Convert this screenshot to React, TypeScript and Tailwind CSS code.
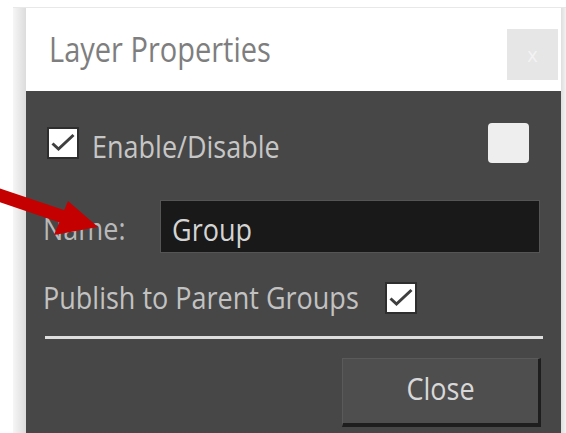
import React from "react";

function CheckBox() {
  return (
    <div className="h-[32px] w-[32px] shrink-0 border-2 border-[#2e2e2e] bg-white">
      <svg viewBox="0 0 28 28" className="h-full w-full">
        <path d="M3.5 14.5 L9.5 20 L24.5 6" fill="none" stroke="#3f3f3f" strokeWidth="3" />
      </svg>
    </div>
  );
}

function Label({ children, className = "" }: { children: React.ReactNode; className?: string }) {
  return (
    <span className={`inline-block origin-center scale-y-[1.15] whitespace-nowrap text-[27px] leading-[32px] ${className}`}>
      {children}
    </span>
  );
}

export default function App() {
  return (
    <div className="relative h-[433px] w-[566px] overflow-hidden bg-white font-['Open_Sans',sans-serif]">
      <div className="ml-[13px] mt-[7px] flex h-[426px] border-t border-[#e8e8e8]">
        {/* window shadow, left side */}
        <div className="w-[13px] bg-linear-to-r from-[#f6f6f6] to-[#dcdcdc]" />

        <div className="flex w-[535px] flex-col">
          {/* title bar */}
          <div className="flex h-[83px] items-start justify-between bg-white">
            <span className="ml-[23px] mt-[21px] inline-block origin-center scale-y-[1.18] whitespace-nowrap text-[29px] leading-[40px] text-[#7e7e7e]">
              Layer Properties
            </span>
            <div className="mr-[3px] mt-[21px] flex h-[51px] w-[51px] items-center justify-center bg-[#e6e6e6] text-[20px] leading-none text-[#f3f3f3]">
              x
            </div>
          </div>

          {/* dialog body */}
          <div className="flex flex-1 flex-col bg-[#474747]">
            <div className="mt-[32px] flex h-[40px] items-center justify-between pl-[21px] pr-[32px]">
              <div className="flex items-center gap-[13px]">
                <CheckBox />
                <Label className="mt-[6px] text-[#c6c6c6]">Enable/Disable</Label>
              </div>
              <div className="h-[40px] w-[41px] rounded-[4px] bg-[#eeeeee]" />
            </div>

            <div className="mt-[37px] flex h-[53px] items-center pl-[17px]">
              <div className="flex w-[117px] items-center">
                <Label className="mt-[2px] text-[#b9b9b9]">Name:</Label>
              </div>
              <div className="flex h-[53px] w-[380px] items-center border border-[#555555] bg-[#191919] pl-[11px]">
                <Label className="mt-[4px] text-[#d4d4d4]">Group</Label>
              </div>
            </div>

            <div className="mt-[29px] flex h-[32px] items-center gap-[26px] pl-[17px]">
              <Label className="-mt-[3px] text-[#c2c2c2]">Publish to Parent Groups</Label>
              <CheckBox />
            </div>

            <div className="ml-[19px] mt-[22px] h-[3px] w-[498px] bg-[#dedede]" />

            <div className="mt-[19px] flex justify-end pr-[20px]">
              <button className="flex h-[69px] w-[199px] items-center justify-center border-b-[4px] border-l border-r-[3px] border-t border-b-[#1e1e1e] border-l-[#5a5a5a] border-r-[#1e1e1e] border-t-[#5a5a5a] bg-[#4e4e4e]">
                <Label className="-mt-[6px] text-[#d8d8d8]">Close</Label>
              </button>
            </div>
          </div>
        </div>

        {/* window shadow, right side */}
        <div className="w-[5px] bg-linear-to-r from-[#dedede] to-[#f2f2f2]" />
      </div>

      {/* red callout arrow */}
      <svg className="pointer-events-none absolute left-0 top-0" width="566" height="433" viewBox="0 0 566 433">
        <line x1="-4" y1="194" x2="64" y2="217" stroke="#c40000" strokeWidth="13" />
        <polygon points="68,201 54,235 98,227" fill="#c40000" />
      </svg>
    </div>
  );
}
